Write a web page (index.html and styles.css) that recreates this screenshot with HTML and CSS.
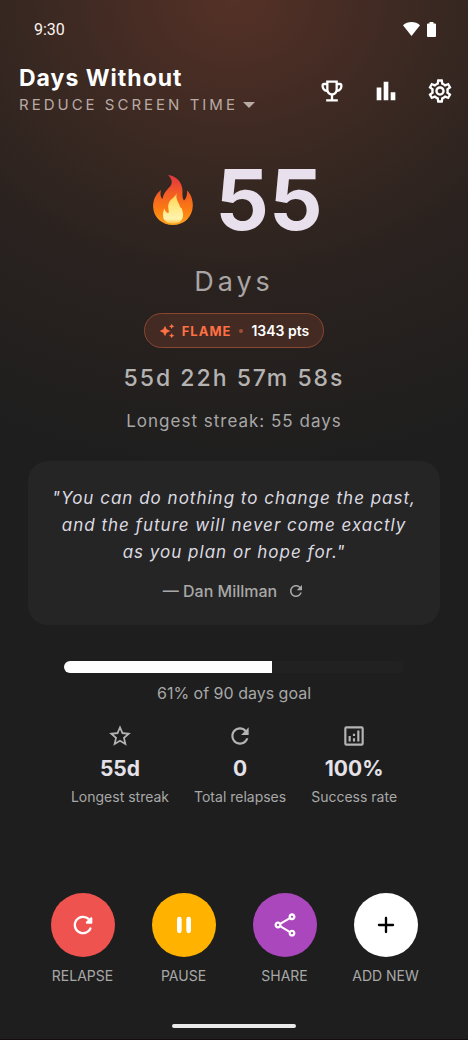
FILE: index.html
```html
<!DOCTYPE html>
<html lang="en">
<head>
<meta charset="utf-8">
<meta name="viewport" content="width=device-width, initial-scale=1">
<title>Days Without</title>
<link rel="stylesheet" href="styles.css">
</head>
<body>
<svg class="defs" aria-hidden="true">
  <symbol id="refresh" viewBox="0 0 24 24"><path d="M17.65 6.35C16.2 4.9 14.21 4 12 4c-4.42 0-7.99 3.58-7.99 8s3.57 8 7.99 8c3.73 0 6.84-2.55 7.73-6h-2.08c-.82 2.33-3.04 4-5.65 4-3.31 0-6-2.69-6-6s2.69-6 6-6c1.66 0 3.14.69 4.22 1.78L13 11h7V4l-2.35 2.35z"/></symbol>
</svg>
<div class="app">
  <div class="status">
    <span class="status-time">9:30</span>
    <span class="status-icons">
      <svg class="wifi" viewBox="0 0 17 14"><path d="M8.500 14L0 3.200C2.400 1.100 5.300 0 8.500 0s6.100 1.100 8.500 3.200z"/></svg>
      <svg class="battery" viewBox="0 0 9 15"><path d="M2.500 0h4v1.500H8a1 1 0 0 1 1 1V14a1 1 0 0 1-1 1H1a1 1 0 0 1-1-1V2.500a1 1 0 0 1 1-1h1.500z"/></svg>
    </span>
  </div>

  <header class="header">
    <div>
      <h1 class="title">Days Without</h1>
      <button class="habit" type="button">REDUCE SCREEN TIME
        <svg class="caret" viewBox="0 0 12 6"><path d="M0 0h12L6 6z"/></svg>
      </button>
    </div>
    <nav class="tools">
      <button class="tool" type="button" aria-label="Achievements"><svg class="icon" viewBox="0 0 24 24"><path d="M19 5h-2V3H7v2H5c-1.100 0-2 .9-2 2v1c0 2.550 1.920 4.630 4.390 4.940.63 1.500 1.980 2.630 3.610 2.960V19H7v2h10v-2h-4v-3.100c1.630-.33 2.980-1.460 3.610-2.960C19.080 12.630 21 10.550 21 8V7c0-1.100-.9-2-2-2zM5 8V7h2v3.820C5.840 10.400 5 9.300 5 8zm7 6c-1.650 0-3-1.350-3-3V5h6v6c0 1.650-1.350 3-3 3zm7-6c0 1.300-.84 2.400-2 2.820V7h2v1z"/></svg></button>
      <button class="tool" type="button" aria-label="Statistics"><svg class="icon" viewBox="0 0 24 24"><path d="M4 9h4v11H4zm12 4h4v7h-4zm-6-9h4v16h-4z"/></svg></button>
      <button class="tool" type="button" aria-label="Settings"><svg class="icon" viewBox="0 0 24 24"><path d="M19.43 12.98c.04-.32.07-.64.07-.98 0-.34-.03-.66-.07-.98l2.110-1.650c.19-.15.24-.42.12-.64l-2-3.460c-.09-.16-.26-.25-.44-.25-.06 0-.12.01-.17.03l-2.490 1c-.52-.4-1.080-.73-1.690-.98l-.38-2.650C14.460 2.180 14.250 2 14 2h-4c-.25 0-.46.18-.49.42l-.38 2.650c-.61.25-1.170.59-1.690.98l-2.490-1c-.06-.02-.12-.03-.18-.03-.17 0-.34.09-.43.25l-2 3.460c-.13.22-.07.49.12.64l2.110 1.650c-.04.32-.07.65-.07.98 0 .33.03.66.07.98l-2.110 1.650c-.19.15-.24.42-.12.64l2 3.460c.09.16.26.25.44.25.06 0 .12-.01.17-.03l2.490-1c.52.4 1.080.73 1.690.98l.38 2.650c.03.24.24.42.49.42h4c.25 0 .46-.18.49-.42l.38-2.650c.61-.25 1.170-.59 1.690-.98l2.490 1c.06.02.12.03.18.03.17 0 .34-.09.43-.25l2-3.460c.12-.22.07-.49-.12-.64l-2.110-1.650zm-1.980-1.710c.04.31.05.52.05.73 0 .21-.02.43-.05.73l-.14 1.130.89.7 1.080.84-.7 1.210-1.270-.51-1.040-.42-.9.68c-.43.32-.84.56-1.250.73l-1.060.43-.16 1.130-.2 1.350h-1.400l-.19-1.350-.16-1.130-1.060-.43c-.43-.18-.83-.41-1.230-.71l-.91-.7-1.060.43-1.270.51-.7-1.210 1.080-.84.89-.7-.14-1.130c-.03-.31-.05-.54-.05-.74s.02-.43.05-.73l.14-1.130-.89-.7-1.080-.84.7-1.210 1.270.51 1.040.42.9-.68c.43-.32.84-.56 1.250-.73l1.060-.43.16-1.130.2-1.350h1.390l.19 1.350.16 1.130 1.060.43c.43.18.83.41 1.230.71l.91.7 1.060-.43 1.270-.51.7 1.210-1.070.85-.89.7.14 1.130zM12 8c-2.210 0-4 1.790-4 4s1.790 4 4 4 4-1.790 4-4-1.790-4-4-4zm0 6c-1.100 0-2-.9-2-2s.9-2 2-2 2 .9 2 2-.9 2-2 2z"/></svg></button>
    </nav>
  </header>

  <main class="main">
    <section class="counter">
      <div class="count">
        <svg class="flame" viewBox="0 0 40 50" role="img" aria-label="Flame">
          <defs>
            <linearGradient id="outer" x1="0" y1="0" x2="0" y2="1"><stop offset="0" stop-color="#e2343f"/><stop offset=".35" stop-color="#f25a26"/><stop offset=".7" stop-color="#fa7d12"/><stop offset="1" stop-color="#fca01c"/></linearGradient>
            <linearGradient id="inner" x1="0" y1="0" x2="0" y2="1"><stop offset="0" stop-color="#ffd04a"/><stop offset=".45" stop-color="#ffe680"/><stop offset=".85" stop-color="#fff3ae"/><stop offset="1" stop-color="#ffc043"/></linearGradient>
          </defs>
          <path fill="url(#outer)" d="M15 0C23 1 30 7 29.500 17C29.300 20 29.500 23.500 31 25.500C33.500 23.500 34.500 19 34 15.500C38 19 40 25 39.800 31C39.500 42 31 50 20 50C9 50 .5 42.500.1 32C-.1 25 3 18.500 8 15C7 19 7.500 22 9.500 24C10.500 18 14 15 17 11.500C20 8 19 3.500 15 0z"/>
          <path fill="url(#inner)" d="M24 18C22.500 22 24 25 26 29C27 31.500 27.200 33 28.500 33C29.500 36 30.300 38 30 41C29.300 46 26 48.500 20 48.500C13.500 48.500 10 45.500 10 40C10 37.500 10.500 35 11.500 33.500C12 36 13.500 38 15.500 38C16.500 36 14.500 33 15.500 29C16.500 24.500 21.500 23 24 18z"/>
        </svg>
        <span class="count-number">55</span>
      </div>
      <p class="count-unit">Days</p>
      <div class="badge">
        <svg class="sparkle" viewBox="0 0 24 24"><path d="M19 9l1.250-2.750L23 5l-2.750-1.250L19 1l-1.250 2.750L15 5l2.750 1.250L19 9zm-7.500.5L9 4 6.500 9.500 1 12l5.500 2.500L9 20l2.500-5.500L17 12l-5.500-2.500zM19 15l-1.250 2.750L15 19l2.750 1.250L19 23l1.250-2.750L23 19l-2.750-1.250L19 15z"/></svg>
        <span class="badge-level">FLAME</span>
        <span class="badge-dot"></span>
        <span class="badge-points">1343 pts</span>
      </div>
      <p class="elapsed">55d 22h 57m 58s</p>
      <p class="longest">Longest streak: 55 days</p>
    </section>

    <figure class="quote">
      <blockquote class="quote-text">"You can do nothing to change the past, and the future will never come exactly as you plan or hope for."</blockquote>
      <figcaption class="quote-author">— Dan Millman
        <button class="quote-next" type="button" aria-label="New quote"><svg class="icon-small"><use href="#refresh"/></svg></button>
      </figcaption>
    </figure>

    <section class="goal">
      <progress class="goal-bar" id="goal" max="90" value="55"></progress>
      <label class="goal-label" for="goal">61% of 90 days goal</label>
    </section>

    <section class="stats">
      <div class="stat">
        <svg class="stat-icon" viewBox="0 0 24 24"><path d="M22 9.240l-7.190-.62L12 2 9.190 8.630 2 9.240l5.460 4.730L5.820 21 12 17.270 18.180 21l-1.630-7.030L22 9.240zM12 15.400l-3.760 2.270 1-4.280-3.320-2.880 4.380-.38L12 6.100l1.710 4.040 4.380.38-3.320 2.880 1 4.280L12 15.400z"/></svg>
        <strong class="stat-value">55d</strong>
        <span class="stat-label">Longest streak</span>
      </div>
      <div class="stat">
        <svg class="stat-icon"><use href="#refresh"/></svg>
        <strong class="stat-value">0</strong>
        <span class="stat-label">Total relapses</span>
      </div>
      <div class="stat">
        <svg class="stat-icon" viewBox="0 0 24 24"><path fill-rule="evenodd" d="M5 3h14a2 2 0 0 1 2 2v14a2 2 0 0 1-2 2H5a2 2 0 0 1-2-2V5a2 2 0 0 1 2-2zm0 2v14h14V5zM7 12h2v5H7zm8-5h2v10h-2zm-4 7h2v3h-2zm0-4h2v2h-2z"/></svg>
        <strong class="stat-value">100%</strong>
        <span class="stat-label">Success rate</span>
      </div>
    </section>
  </main>

  <footer class="actions">
    <button class="action" type="button">
      <span class="disc disc-red"><svg class="icon" viewBox="0 0 24 24"><path d="M17.650 6.350c-1.630-1.630-3.940-2.570-6.480-2.310-3.670.37-6.690 3.350-7.100 7.020C3.520 15.910 7.270 20 12 20c3.190 0 5.930-1.870 7.210-4.560.32-.67-.16-1.440-.9-1.440-.37 0-.72.2-.88.53-1.130 2.430-3.840 3.970-6.800 3.310-2.220-.49-4.010-2.300-4.480-4.520C5.310 9.440 8.260 6 12 6c1.660 0 3.140.69 4.220 1.780l-1.510 1.510c-.63.63-.19 1.710.7 1.710H19c.55 0 1-.45 1-1V6.410c0-.89-1.080-1.340-1.710-.71l-.64.65z"/></svg></span>
      RELAPSE
    </button>
    <button class="action" type="button">
      <span class="disc disc-amber"><svg class="icon" viewBox="0 0 24 24"><rect x="6" y="5" width="4" height="14" rx="2"/><rect x="14" y="5" width="4" height="14" rx="2"/></svg></span>
      PAUSE
    </button>
    <button class="action" type="button">
      <span class="disc disc-purple"><svg class="icon" viewBox="0 0 24 24"><path d="M18 16.080c-.76 0-1.440.3-1.960.77L8.910 12.700c.05-.23.09-.46.09-.7s-.04-.47-.09-.7l7.050-4.110c.54.5 1.250.81 2.040.81 1.660 0 3-1.340 3-3s-1.340-3-3-3-3 1.340-3 3c0 .24.04.47.09.7L8.040 9.810C7.500 9.310 6.790 9 6 9c-1.660 0-3 1.340-3 3s1.340 3 3 3c.79 0 1.500-.31 2.040-.81l7.120 4.160c-.05.21-.08.43-.08.65 0 1.610 1.310 2.920 2.920 2.920s2.920-1.310 2.920-2.920-1.310-2.920-2.920-2.920zM18 4c.55 0 1 .45 1 1s-.45 1-1 1-1-.45-1-1 .45-1 1-1zM6 13c-.55 0-1-.45-1-1s.45-1 1-1 1 .45 1 1-.45 1-1 1zm12 7.020c-.55 0-1-.45-1-1s.45-1 1-1 1 .45 1 1-.45 1-1 1z"/></svg></span>
      SHARE
    </button>
    <button class="action" type="button">
      <span class="disc disc-white"><svg class="icon" viewBox="0 0 24 24"><path d="M18 13h-5v5c0 .55-.45 1-1 1s-1-.45-1-1v-5H6c-.55 0-1-.45-1-1s.45-1 1-1h5V6c0-.55.45-1 1-1s1 .45 1 1v5h5c.55 0 1 .45 1 1s-.45 1-1 1z"/></svg></span>
      ADD NEW
    </button>
  </footer>
  <div class="home-bar"></div>
</div>
</body>
</html>
```

FILE: styles.css
```css
* {
  box-sizing: border-box;
}

body {
  margin: 0;
  background: #1e1e1e;
  color: #fff;
  font-family: Inter, "Liberation Sans", sans-serif;
}

h1, p, figure, blockquote {
  margin: 0;
}

button {
  padding: 0;
  border: 0;
  background: none;
  color: inherit;
  font: inherit;
  cursor: pointer;
}

svg {
  display: block;
  fill: currentColor;
}

.defs {
  position: absolute;
  width: 0;
  height: 0;
}

.app {
  display: flex;
  flex-direction: column;
  min-height: 100vh;
  border-bottom: 1px solid #150c10;
  background: radial-gradient(120vw 100vw at top, #553127, #3b2922 33%, #2a221f 60%, #1e1e1e);
}

.status {
  display: flex;
  align-items: center;
  justify-content: space-between;
  height: 58px;
  padding: 0 32px 0 34px;
  color: #fdf3f0;
}

.status-time {
  font-family: Roboto, sans-serif;
  font-size: 16px;
}

.status-icons {
  display: flex;
  align-items: center;
  gap: 7px;
  color: #fff;
}

.wifi {
  width: 17px;
  height: 14px;
}

.battery {
  width: 9px;
  height: 15px;
}

.header {
  display: flex;
  align-items: center;
  justify-content: space-between;
  padding: 6px 14px 0 19px;
}

.title {
  font-size: 23px;
  font-weight: 700;
  line-height: 28px;
  letter-spacing: 1px;
}

.habit {
  display: flex;
  align-items: center;
  gap: 5px;
  color: #b9aaa5;
  font-size: 15px;
  line-height: 26px;
  letter-spacing: 3px;
}

.caret {
  width: 12px;
  height: 6px;
}

.tools {
  display: flex;
  gap: 26px;
}

.icon {
  width: 28px;
  height: 28px;
}

.main {
  display: flex;
  flex-direction: column;
  padding: 0 28px;
}

.counter {
  display: flex;
  flex-direction: column;
  align-items: center;
  padding-top: 32px;
}

.count {
  display: flex;
  align-items: center;
  gap: 22px;
  padding-left: 8px;
}

.flame {
  width: 40px;
  height: 50px;
}

.count-number {
  color: #e8e0ec;
  font-size: 84px;
  font-weight: 700;
  line-height: 100px;
}

.count-unit {
  margin-top: 14px;
  color: #a9a5a4;
  font-size: 27px;
  line-height: 36px;
  letter-spacing: 4px;
}

.badge {
  display: flex;
  align-items: center;
  height: 35px;
  margin-top: 13px;
  padding: 0 14px;
  border: 1px solid #8a4630;
  border-radius: 18px;
  background: #432a23;
}

.sparkle {
  width: 16px;
  height: 16px;
  color: #ff7043;
}

.badge-level {
  margin-left: 7px;
  color: #ff7043;
  font-size: 13px;
  font-weight: 700;
  letter-spacing: 1px;
}

.badge-dot {
  width: 4px;
  height: 4px;
  margin: 0 8px;
  border-radius: 50%;
  background: #a34f36;
}

.badge-points {
  font-size: 14px;
  font-weight: 600;
}

.elapsed {
  margin-top: 16px;
  color: #b5b3b2;
  font-size: 23px;
  font-weight: 500;
  line-height: 28px;
  letter-spacing: 2px;
}

.longest {
  margin-top: 17px;
  color: #a8a7a7;
  font-size: 17px;
  line-height: 24px;
  letter-spacing: 1px;
}

.quote {
  display: flex;
  flex-direction: column;
  align-items: center;
  margin-top: 28px;
  padding: 24px 24px 20px;
  border-radius: 20px;
  background: #252525;
}

.quote-text {
  color: #dcdae0;
  font-size: 17px;
  font-style: italic;
  line-height: 27px;
  letter-spacing: 1px;
  text-align: center;
}

.quote-author {
  display: flex;
  align-items: center;
  gap: 10px;
  margin-top: 11px;
  color: #a8a8a8;
  font-size: 16px;
  font-weight: 500;
  line-height: 28px;
}

.icon-small {
  width: 18px;
  height: 18px;
}

.goal {
  display: flex;
  flex-direction: column;
  align-items: center;
  margin-top: 36px;
  padding: 0 36px;
}

.goal-bar {
  width: 100%;
  height: 12px;
  overflow: hidden;
  border: 0;
  border-radius: 6px;
  background: #212121;
  appearance: none;
}

.goal-bar::-webkit-progress-bar {
  background: #212121;
}

.goal-bar::-webkit-progress-value {
  background: #fff;
}

.goal-label {
  margin-top: 8px;
  color: #a8a8a8;
  font-size: 16px;
  line-height: 24px;
}

.stats {
  display: flex;
  justify-content: center;
  gap: 25px;
  margin-top: 18px;
}

.stat {
  display: flex;
  flex-direction: column;
  align-items: center;
}

.stat-icon {
  width: 26px;
  height: 26px;
  color: #b4b4b4;
}

.stat-value {
  margin-top: 6px;
  color: #e4e1e8;
  font-size: 21px;
  font-weight: 700;
  line-height: 28px;
}

.stat-label {
  margin-top: 4px;
  color: #a8a8a8;
  font-size: 14px;
  line-height: 20px;
}

.actions {
  display: grid;
  grid-template-columns: repeat(4, 1fr);
  margin-top: auto;
  padding: 0 32px;
}

.action {
  display: flex;
  flex-direction: column;
  align-items: center;
  gap: 8px;
  color: #a8a8a8;
  font-size: 14px;
  line-height: 22px;
}

.disc {
  display: grid;
  place-items: center;
  width: 64px;
  height: 64px;
  border-radius: 50%;
  color: #fff;
}

.disc-red {
  background: #ef5350;
}

.disc-amber {
  background: #ffb300;
}

.disc-purple {
  background: #ab47bc;
}

.disc-white {
  background: #fff;
  color: #000;
}

.home-bar {
  align-self: center;
  width: 124px;
  height: 4px;
  margin: 37px 0 11px;
  border-radius: 2px;
  background: #eaeaea;
}
```
